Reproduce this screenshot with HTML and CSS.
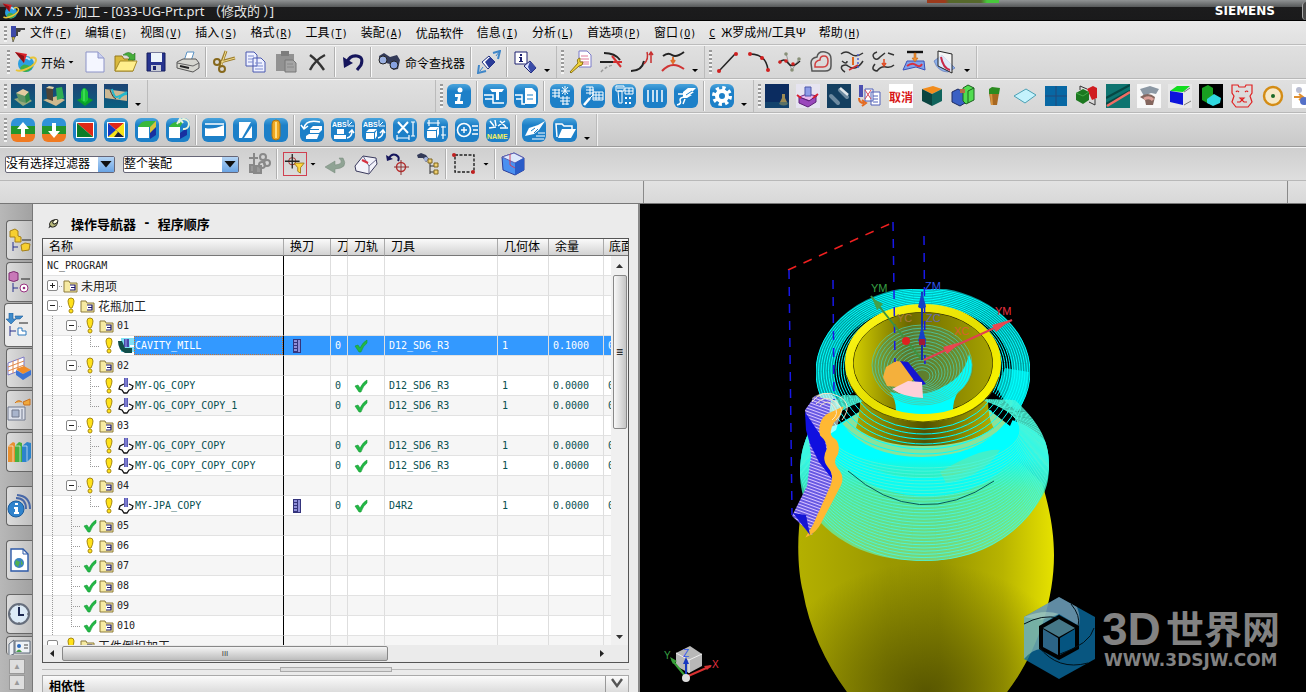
FILE: index.html
```html
<!DOCTYPE html>
<html lang="zh-CN">
<head>
    <meta charset="UTF-8">
    <meta name="viewport" content="width=device-width, initial-scale=1.0">
    <title>NX 7.5 - 加工</title>
    <link rel="stylesheet" href="styles.css">
</head>
<body>
    <!-- Shared icons -->
    <svg class="defs" width="0" height="0" aria-hidden="true">
        <symbol id="nx" viewBox="0 0 24 24">
            <circle cx="12" cy="14" r="8" fill="#2b9fe0"/><path d="M6 18q3-5 7-3t6-2q0 8-7 9-4 0-6-4z" fill="#3fae49"/>
            <path d="M9 8q5-1 7 2" stroke="#bfe8ff" stroke-width="2" fill="none"/>
            <path d="M2 20c5 3 20-4 20-10 0-3-4-3-6-2" fill="none" stroke="#e8c53a" stroke-width="2"/>
            <path d="M1 2l12 2-3 9z" fill="#d8222a"/><path d="M1 2l9 11 0-7z" fill="#8d1016"/>
        </symbol>
        <symbol id="warn" viewBox="0 0 18 18"><path d="M6 4q0-3 3-3t3 3q0 3-2 7H8Q6 7 6 4z" fill="#ffe21a" stroke="#a88a10"/><circle cx="9" cy="14" r="2" fill="#ffe21a" stroke="#a88a10"/></symbol>
        <symbol id="ok" viewBox="0 0 18 18"><path d="M3 9l3-1 2 3q3-6 7-8l0 3q-4 3-6 9H7z" fill="#22b845" stroke="#159a34" stroke-width=".6"/></symbol>
        <symbol id="folder" viewBox="0 0 16 16"><path d="M1 3h5l1 2h7v9H1z" fill="#f6eaa2" stroke="#8c7a3c"/><path d="M7 7h5v5H7M8 9.500h4" stroke="#1c1670" stroke-width="1.2" fill="#fff"/></symbol>
        <symbol id="mill" viewBox="0 0 16 16"><path d="M6 6L2 8l-1 3 3 1 2 3h3l2-3 3-1 1-3-4-2" fill="#fff" stroke="#111" stroke-width="1.3"/><path d="M6 0h4v9H6z" fill="#5a5ab4"/><path d="M8 0v9" stroke="#a0a0e8"/></symbol>
        <symbol id="cavity" viewBox="0 0 16 16"><rect x="3" width="13" height="14" fill="#7fe0f4"/><path d="M0 3h4l3 7h7v5H7Q0 12 0 3z" fill="#124f4a"/><path d="M6 1h5v8H6z" fill="#4848a8"/><path d="M8 1v8" stroke="#a0a0f0"/><path d="M12 7h4v2h-4z" fill="#fff"/></symbol>
        <symbol id="tool" viewBox="0 0 10 14"><path d="M1 0h8v14H1z" fill="#34347c"/><path d="M2 2h3M2 5h3M2 8h3M2 11h3M7 1v12" stroke="#8f8fd8" stroke-width="2"/></symbol>
    </svg>

    <header class="titlebar">
        <svg class="app-logo"><use href="#nx"/></svg>
        <h1>NX 7.5 - 加工 - [033-UG-Prt.prt （修改的 ）]</h1>
        <span class="top-mark"></span>
        <span class="brand">SIEMENS</span>
        <button class="win-btn" aria-label="最小化"></button>
    </header>

    <nav class="menubar">
        <span class="grip"></span>
        <svg class="menu-icon" viewBox="0 0 18 18"><path d="M2 1h5v11H2z" fill="#3d49a8"/><path d="M3 12l1 5 2-5z" fill="#d8c23c" stroke="#333" stroke-width=".6"/><path d="M7 3h9v2h-4l-1 2H9v4H7z" fill="#444"/></svg>
        <a href="#">文件<span>(<u>F</u>)</span></a>
        <a href="#">编辑<span>(<u>E</u>)</span></a>
        <a href="#">视图<span>(<u>V</u>)</span></a>
        <a href="#">插入<span>(<u>S</u>)</span></a>
        <a href="#">格式<span>(<u>R</u>)</span></a>
        <a href="#">工具<span>(<u>T</u>)</span></a>
        <a href="#">装配<span>(<u>A</u>)</span></a>
        <a href="#">优品软件</a>
        <a href="#">信息<span>(<u>I</u>)</span></a>
        <a href="#">分析<span>(<u>L</u>)</span></a>
        <a href="#">首选项<span>(<u>P</u>)</span></a>
        <a href="#">窗口<span>(<u>O</u>)</span></a>
        <a href="#"><span><u>C</u> </span>Ж罗成州/工具Ψ</a>
        <a href="#">帮助<span>(<u>H</u>)</span></a>
    </nav>

    <!-- Standard / curve toolbar -->
    <div class="toolbar">
        <div class="group first">
            <span class="grip"></span>
            <button class="wide start"><svg><use href="#nx"/></svg>开始<i class="caret"></i></button>
            <button aria-label="新建"><svg viewBox="0 0 24 24"><path d="M3 2h12l6 6v14H3z" fill="#f4f6ff" stroke="#8c93c8"/><path d="M15 2v6h6" fill="#c9d0f0" stroke="#8c93c8"/></svg></button>
            <button aria-label="打开"><svg viewBox="0 0 24 24"><path d="M1 6h7l2 3h9v12H1z" fill="#d9b93c" stroke="#94791c"/><path d="M1 21L6 11h17l-4 10z" fill="#ffee8c" stroke="#a58a28"/><path d="M9 5q6-5 10 0l2-2v7h-7l2-2q-3-4-7-3z" fill="#45ad3a" stroke="#22701c" stroke-width=".6"/></svg></button>
            <button aria-label="保存"><svg viewBox="0 0 24 24"><path d="M2 3h18v18H2z" fill="#27348f" stroke="#141c5c"/><path d="M6 3h11v9H6z" fill="#eef5fb"/><path d="M6 15h10v6H6z" fill="#c9ccd6"/><path d="M8 16h3v4H8z" fill="#1a2470"/></svg></button>
            <button aria-label="打印"><svg viewBox="0 0 24 24"><path d="M8 11l3-9h7l-3 9z" fill="#fff" stroke="#5a92c4"/><path d="M1 12l6-3h13l3 4v5l-6 4L1 18z" fill="#d6d6d0" stroke="#555"/><path d="M1 13l16 3 6-3" fill="none" stroke="#666"/><path d="M4 16l9 2" stroke="#222" stroke-width="2"/></svg></button>
            <span class="sep"></span>
            <button aria-label="剪切"><svg viewBox="0 0 24 24"><path d="M14 1L8 17M23 8L8 12" stroke="#9c7c2c" stroke-width="3"/><path d="M14 1L9 16M23 8L9 12" stroke="#f0dc8c" stroke-width="1"/><g fill="none" stroke="#86681c" stroke-width="2"><circle cx="5" cy="12" r="3"/><circle cx="10" cy="19" r="3"/></g></svg></button>
            <button aria-label="复制"><svg viewBox="0 0 24 24"><path d="M3 2h8l3 3v11H3zM10 8h8l4 4v10H10z" fill="#eef1ff" stroke="#4a58b0"/><path d="M5 6h6M5 9h5M5 12h5M12 13h7M12 16h8M12 19h8" stroke="#7f8cd0"/></svg></button>
            <button aria-label="粘贴"><svg viewBox="0 0 24 24"><path d="M2 4h18v17H2z" fill="#929292"/><path d="M7 1h8v5H7z" fill="#7d7d7d"/><path d="M11 10h8l3 3v9H11z" fill="#a5a5a5" stroke="#777"/><path d="M13 14h6M13 17h7" stroke="#888"/></svg></button>
            <button aria-label="删除"><svg viewBox="0 0 24 24"><path d="M5 5q8 6 14 15M20 5Q10 10 5 20" stroke="#333" stroke-width="2.4" fill="none"/></svg></button>
            <span class="sep"></span>
            <button aria-label="撤消"><svg viewBox="0 0 24 24"><path d="M6 12Q9 5 16 6t4 9l-4 5" fill="none" stroke="#16165c" stroke-width="3"/><path d="M2 7l1 11 9-5z" fill="#16165c"/></svg></button>
            <span class="sep"></span>
            <button class="wide finder"><svg viewBox="0 0 24 24"><path d="M2 6l5-3 6 4 7-2 3 5-2 9-5 1-3-6-4-1-2 1-4-2z" fill="#333a58"/><circle cx="6" cy="10" r="4" fill="#9ab0e0" stroke="#222"/><circle cx="17" cy="15" r="4" fill="#87a2e0" stroke="#222"/></svg>命令查找器</button>
            <span class="sep"></span>
            <button aria-label="旋转"><svg viewBox="0 0 24 24"><path d="M5 12l7-6 6 6-7 7z" fill="#fff" stroke="#223080"/><path d="M8 12l5-5 5 5-6 6z" fill="#2a3c98"/><path d="M16 3l7-2-2 8M2 15l-1 8 8-2" fill="none" stroke="#3f86c8" stroke-width="2"/><path d="M19 6l3-4M3 21l3-4" stroke="#3f86c8"/></svg></button>
            <span class="sep"></span>
            <button aria-label="对象信息"><svg viewBox="0 0 24 24"><path d="M2 2h12v12H2z" fill="#fff" stroke="#1c2070"/><path d="M7 4h2v2H7zM6 7h3v4h1v1H6v-1h1V8H6z" fill="#1c2070"/><path d="M11 16l6-5 6 7-5 5z" fill="#d8e0ff" stroke="#1c2070"/><path d="M17 11l6 7-5 5-3-6z" fill="#3a4ca8"/></svg></button>
            <i class="caret low"></i>
        </div>
        <div class="group">
            <span class="grip"></span>
            <button aria-label="编辑曲线"><svg viewBox="0 0 24 24"><path d="M11 1h8l4 4v12H11z" fill="#fff" stroke="#7a7ac8"/><path d="M13 6h7M13 9h8M13 12h8M13 14h8" stroke="#e07a98"/><path d="M2 22l8-9q-2-4 2-5l0 4 3 0q0 4-4 4l-8 7z" fill="#f2d43c" stroke="#8a7418"/></svg></button>
            <button aria-label="修剪曲线"><svg viewBox="0 0 24 24" fill="none" stroke-width="1.5"><path d="M5 3q11 0 16 7M1 12h13" stroke="#222" stroke-width="2"/><path d="M14 12h9M13 6l9 11" stroke="#d43030" stroke-width="2"/><path d="M2 22q5-6 13-7" stroke="#999" stroke-dasharray="3 2"/></svg></button>
            <button aria-label="曲线长度"><svg viewBox="0 0 24 24" fill="none" stroke-width="1.5"><path d="M1 21q11 0 13-10" stroke="#222" stroke-width="2"/><path d="M14 14q5-5 3-12M21 3v10M19 5l2-3 2 3" stroke="#c83030"/></svg></button>
            <button aria-label="光顺曲线"><svg viewBox="0 0 24 24" fill="none" stroke-width="2"><path d="M2 6q5-4 9-1t12-3" stroke="#222"/><path d="M12 7v5M10 10l2 3 2-3" stroke="#e0702c"/><path d="M1 21q10-11 22-2" stroke="#d03434"/></svg></button>
            <i class="caret low"></i>
        </div>
        <div class="group">
            <span class="grip"></span>
            <button aria-label="直线"><svg viewBox="0 0 24 24"><path d="M3 21L19 4" stroke="#222" stroke-width="1.5"/><circle cx="3" cy="21" r="2" fill="#d02020"/><circle cx="20" cy="4" r="2" fill="#d02020"/></svg></button>
            <button aria-label="圆弧"><svg viewBox="0 0 24 24"><path d="M3 4q16 0 18 16" stroke="#222" stroke-width="1.5" fill="none"/><g fill="#d02020"><circle cx="3" cy="4" r="2"/><circle cx="15" cy="8" r="2"/><circle cx="21" cy="20" r="2"/></g></svg></button>
            <button aria-label="样条"><svg viewBox="0 0 24 24"><path d="M8 3l2 8 4 9 7-11" stroke="#999" fill="none"/><path d="M1 13q5-6 9 0t12-2" stroke="#222" stroke-width="1.5" fill="none"/><g fill="#d02020"><circle cx="2" cy="12" r="1.8"/><circle cx="8" cy="11" r="1.8"/><circle cx="15" cy="14" r="1.8"/></g><g fill="#889078"><circle cx="8" cy="4" r="1.8"/><circle cx="14" cy="20" r="1.8"/><circle cx="21" cy="9" r="1.8"/></g></svg></button>
            <button aria-label="偏置曲线"><svg viewBox="0 0 24 24" fill="none"><path d="M2 13q0-5 6-6 1-6 8-5 6 1 6 7v7q0 5-6 5H3z" stroke="#555" stroke-width="1.5"/><path d="M6 15q0-4 5-5 0-4 4-4 4 0 4 5 0 6-5 6H6z" stroke="#d04040" stroke-width="1.5"/></svg></button>
            <button aria-label="桥接曲线"><svg viewBox="0 0 24 24" fill="none" stroke="#333" stroke-width="1.5"><path d="M1 4q5-4 10 0t12-1M2 11q5 4 5 0M5 22q-5-3-3-6 4-2 6 0 8 6 15-5"/><path d="M9 20l9-5" stroke="#d03030"/><path d="M13 7v8" stroke="#e06820" stroke-width="2"/><path d="M18 4v14" stroke="#5060d0" stroke-dasharray="2"/></svg></button>
            <button aria-label="投影曲线"><svg viewBox="0 0 24 24" fill="none" stroke="#333" stroke-width="1.5"><path d="M6 2Q0 4 3 8q3 3 6-1l5-4M17 3l6 2"/><path d="M4 14q-5 6 2 7 4-5 9-4t8-2"/><path d="M13 9v5M11 13l2 3 2-3" stroke="#e04820"/></svg></button>
            <button aria-label="组合投影"><svg viewBox="0 0 24 24"><path d="M5 2h16" stroke="#111" stroke-width="2.4"/><path d="M1 20l4-9h17l1 9-9-3z" fill="#7fa2ec" stroke="#3a50b8"/><path d="M5 16q5-4 9-1t6-1" stroke="#d83040" stroke-width="2" fill="none"/><path d="M12 3h2v5h2l-3 4-3-4h2z" fill="#f09030" stroke="#b05a10" stroke-width=".5"/></svg></button>
            <button aria-label="相交曲线"><svg viewBox="0 0 24 24"><path d="M1 11l8-6 13 13-7 4q-10 0-14-11z" fill="#8cb2ee" stroke="#5068b0" stroke-width=".6"/><path d="M5 1l14 3v19L5 16z" fill="#fff" fill-opacity=".7" stroke="#222"/><path d="M8 7q2 11 9 13" fill="none" stroke="#c82848" stroke-width="2"/></svg></button>
            <i class="caret low"></i>
        </div>
        <div class="group rest"></div>
    </div>

    <!-- Machining toolbar -->
    <div class="toolbar">
        <div class="group">
            <span class="grip"></span>
            <button class="navy" aria-label="型腔铣"><svg viewBox="0 0 24 24"><path d="M3 15l12-3 6 5-9 5z" fill="#94a87c"/><path d="M5 9l3 8 7 2V10z" fill="#5f9466"/><path d="M5 9l7-4 6 3-4 4z" fill="#e4cca0"/><path d="M14 12l4-4 1 8-4 3z" fill="#2a8844"/></svg></button>
            <button class="navy" aria-label="等高铣"><svg viewBox="0 0 24 24"><path d="M1 16l14-4 8 4-9 6z" fill="#cdb98f"/><path d="M4 4h7v13l-6-2z" fill="#4d4438"/><path d="M4 4l3-2 5 1-1 2z" fill="#dfcfa8"/><path d="M14 4l6-1 2 11-7 2z" fill="#2fae54"/></svg></button>
            <button class="navy" aria-label="曲面铣"><svg viewBox="0 0 24 24"><path d="M4 16l8-4 8 4-8 6z" fill="#08a028"/><path d="M8 16V8q3-8 7 0v8l-3 3z" fill="#19c536"/><path d="M11 5v12" stroke="#5ff070"/></svg></button>
            <button class="navy" aria-label="清根铣"><svg viewBox="0 0 24 24"><path d="M1 5l22 3v9l-22-3z" fill="#cbb893"/><path d="M8 5q2 9 5 8t10-5M15 15q3-5 8-5" stroke="#24b8cc" stroke-width="2" fill="none"/><path d="M6 6q3 8 6 9" stroke="#333" fill="none"/></svg></button>
            <i class="caret low"></i>
        </div>
        <div class="group gap"></div>
        <div class="group">
            <span class="grip"></span>
            <button class="blue" aria-label="信息"><svg viewBox="0 0 24 24"><circle cx="13" cy="6" r="2.5" fill="#fff"/><path d="M8 10h6l-1 7h3v3H8v-3h2l1-4H8z" fill="#fff"/></svg></button>
            <span class="sep"></span>
            <button class="blue" aria-label="刀具"><svg viewBox="0 0 24 24" class="w"><path d="M7 5h14l-2 3h-3v8h-3V8H9z" fill="#fff" stroke="none"/><path d="M1 11h9v4H2M10 15v4h11" stroke-width="1.5"/></svg></button>
            <button class="blue" aria-label="刀具表"><svg viewBox="0 0 24 24" class="w"><path d="M11 4h7l4 4v12H11z" fill="#fff" stroke="none"/><path d="M1 11h7v4H2M8 15v5h3" stroke-width="1.5"/><path d="M13 11h6M13 15h6" stroke="#1d80c8" stroke-width="1"/></svg></button>
            <span class="sep"></span>
            <button class="blue" aria-label="生成"><svg viewBox="0 0 24 24" class="w thin"><path d="M2 6h8M2 9h8M2 12h8M5 5v9M9 5v9M15 2v9M11 7h9M12 3l6 7M18 3l-6 7M10 14h10M10 17h10M12 20h7M13 12v9M17 12v9"/></svg></button>
            <button class="blue" aria-label="模拟"><svg viewBox="0 0 24 24" class="w thin"><path d="M5 3h7v8l-4 4-4 5M5 6h8M5 9h7M9 3v8M12 8h10v8H12zM12 11h10M12 14h10M15 8v8M18 8v8"/><path d="M3 21l6-7" stroke-width="2.6"/></svg></button>
            <button class="blue" aria-label="后处理"><svg viewBox="0 0 24 24" class="w thin"><path d="M4 2h8v5H4zM5 4h6M6 7h4v12H7zM13 4h8v6h-8zM13 7h8M17 4v6"/><path d="M13 14h8M13 19h8" stroke-width="2" stroke-dasharray="2"/></svg></button>
            <button class="blue" aria-label="车间文档"><svg viewBox="0 0 24 24" class="w"><path d="M5 6v12M10 6v12M14 6v12M19 6v12" stroke-width="1.5"/></svg></button>
            <button class="blue" aria-label="刀路"><svg viewBox="0 0 24 24" class="w"><path d="M9 8l5-4h8l-4 4h2l-4 3h2l-5 3H9z" fill="#fff" stroke="none"/><path d="M4 10h6M3 21q5-1 3-5 0-3 6-3M9 20l2-5" stroke-width="1.5"/><path d="M12 11l6-4" stroke="#1d80c8" stroke-width="1"/></svg></button>
            <span class="sep"></span>
            <button class="blue" aria-label="设置"><svg viewBox="0 0 24 24" class="w"><circle cx="12" cy="12" r="8" stroke-width="4" stroke-dasharray="3.2 3.08"/><circle cx="12" cy="12" r="5" stroke-width="4"/></svg></button>
            <i class="caret low"></i>
        </div>
        <div class="group last">
            <span class="grip"></span>
            <button aria-label="刀柄"><svg viewBox="0 0 24 24"><path d="M0 0h24v24H0z" fill="#0b2c60"/><path d="M14 20l3-6 0-4h3v4l3 6q-4 3-9 0z" fill="#9c8a54"/><path d="M0 18h24v6H0z" fill="#1a5878" opacity=".5"/></svg></button>
            <button aria-label="工件"><svg viewBox="0 0 24 24"><path d="M0 0h24v24H0z" fill="#e6e4f0"/><path d="M3 13l8-3 10 2-7 5z" fill="#e8b8ee" stroke="#6c2888"/><path d="M3 13v6l9 4 8-5v-6l-7 5z" fill="#9a48bc" stroke="#5c2078"/><path d="M9 3h6v9H9z" fill="#8d9ce8" stroke="#4c56a8"/><path d="M1 11l4 3M22 10l-5 4" stroke="#d82030" stroke-width="2"/></svg></button>
            <button aria-label="圆柱"><svg viewBox="0 0 24 24"><path d="M0 0h24v24H0z" fill="#143f60"/><path d="M4 12l7 7M13 6l7 7" stroke="#6d8aa0" stroke-width="4" stroke-linecap="round"/><path d="M13 4l8 7" stroke="#e0e6ea" stroke-width="2.5"/></svg></button>
            <button aria-label="列表"><svg viewBox="0 0 24 24"><path d="M1 1h4v12H1z" fill="#4c50b0"/><path d="M1 14q0 5 5 5M4 16l4 3-4 3" stroke="#e46a20" stroke-width="2" fill="none"/><path d="M7 5h8v12H7zM13 8h9v13h-9z" fill="#fff" stroke="#5060b8"/><path d="M7 6l6 9M13 6l-6 9" stroke="#d84858"/><path d="M15 12h5M15 15h5M15 18h5" stroke="#5060b8"/></svg></button>
            <button class="cancel">取消</button>
            <button aria-label="毛坯"><svg viewBox="0 0 24 24"><path d="M2 5l11-3 9 3-10 5z" fill="#f28c1c"/><path d="M2 5l10 5v12L2 17z" fill="#0a4440"/><path d="M12 10l10-5v12l-10 5z" fill="#10645c"/></svg></button>
            <button aria-label="装配块"><svg viewBox="0 0 24 24"><path d="M1 8l6-3 7 4v10l-5 3-8-4z" fill="#3a60c4" stroke="#1c2a60"/><path d="M12 4l5-3 6 3v12l-8 4-3-3z" fill="#52dc50" stroke="#1c6020"/><path d="M17 7v12M17 7l6-3" stroke="#1c6020"/><path d="M9 5h5v4H9z" fill="#b86848"/></svg></button>
            <button aria-label="夹具"><svg viewBox="0 0 24 24"><path d="M7 9h10l-2 12H9z" fill="#a86820"/><path d="M9 9l1 12" stroke="#d89440" stroke-width="2"/><path d="M7 5l3-2 8 1-1 6H7z" fill="#2c8c20"/></svg></button>
            <button aria-label="平面"><svg viewBox="0 0 24 24"><path d="M1 12l12-7 10 6-11 8z" fill="#c4f2fc" stroke="#4ca0b4"/></svg></button>
            <button aria-label="网格"><svg viewBox="0 0 24 24"><path d="M1 2h22v20H1z" fill="#0868a4"/><path d="M1 12h22M12 2v20" stroke="#224878"/></svg></button>
            <button aria-label="布尔"><svg viewBox="0 0 24 24"><path d="M12 5l6-3 4 2v10l-5 2z" fill="#d01c20"/><path d="M1 9l7-4 6 3v8l-6 4-7-4z" fill="#1c7820"/><path d="M1 9l7 3 6-4" stroke="#46a848" fill="none"/><path d="M5 6V2l7 3M20 15v6l-6-3" stroke="#333" fill="none"/></svg></button>
            <button aria-label="曲面"><svg viewBox="0 0 24 24"><path d="M0 0h24v24H0z" fill="#0e7470"/><path d="M0 14L24 1M0 20L24 7" stroke="#064844" stroke-width="2"/><path d="M1 22L24 8" stroke="#f06c64" stroke-width="2.5"/></svg></button>
            <button aria-label="模具"><svg viewBox="0 0 24 24"><path d="M0 0h24v24H0z" fill="#f8f8f8"/><path d="M3 5l10-3 9 3-3 5-5-1-7 3z" fill="#8c98a4"/><path d="M3 13q8-6 15 0l-2 8H9l-1-5z" fill="#84665e"/><path d="M7 15q6-3 9 1" stroke="#dca098" stroke-width="3" fill="none"/></svg></button>
            <button aria-label="分型面"><svg viewBox="0 0 24 24"><path d="M0 0h24v24H0z" fill="#e8e8e8"/><path d="M2 7l7-5h13l-7 6z" fill="#12dd20"/><path d="M2 7l13 2v12L2 18z" fill="#0c14dc"/><path d="M16 8l6-4M16 21l7-4" stroke="#777"/></svg></button>
            <button aria-label="台阶"><svg viewBox="0 0 24 24"><path d="M0 0h24v24H0z" fill="#000"/><path d="M3 4l6-3 5 3v8l-4 8-7-4z" fill="#18a020"/><path d="M8 15l7-5 7 4-1 5-7 3-6-3z" fill="#30d8e0"/></svg></button>
            <button aria-label="小熊"><svg viewBox="0 0 24 24" fill="none" stroke="#e02020" stroke-width="1.2"><path d="M2 9V1h6l1 2h6l1-2h6v8l-2 3 2 6-4 5H6l-4-5 2-6z"/><path d="M6 8q1-2 3 0M15 8q2-2 3 0M10 14l2 2 2-2zM7 18h3l2-2 2 2h3"/></svg></button>
            <button aria-label="圆心"><svg viewBox="0 0 24 24"><circle cx="12" cy="12" r="9" fill="#f6e8c8" stroke="#d48c14" stroke-width="2.4"/><circle cx="12" cy="12" r="2" fill="#186828"/></svg></button>
            <button aria-label="更多"><svg viewBox="0 0 24 24"><path d="M0 0h24v24H0z" fill="#fff"/><circle cx="7" cy="6" r="3" fill="#b8bcd0"/><path d="M2 13h8M7 10l4 3-4 3" stroke="#e09030" stroke-width="2" fill="none"/><circle cx="12" cy="17" r="4" fill="#5470c8"/></svg></button>
        </div>
    </div>

    <!-- Layer and annotation toolbar -->
    <div class="toolbar dark">
        <div class="group">
            <span class="grip"></span>
            <button class="tri" aria-label="上移"><svg viewBox="0 0 24 24"><path d="M12 4l6 7h-4v8h-4v-8H6z" fill="#fff"/></svg></button>
            <button class="tri" aria-label="下移"><svg viewBox="0 0 24 24"><path d="M12 20l6-7h-4V5h-4v8H6z" fill="#fff"/></svg></button>
            <button class="blue" aria-label="双色"><svg viewBox="0 0 24 24"><path d="M3 4h18v16H3z" fill="#fff"/><path d="M4 5h16v14z" fill="#e02818"/><path d="M4 5l16 14H4z" fill="#0c7c28"/></svg></button>
            <button class="blue" aria-label="四色"><svg viewBox="0 0 24 24"><path d="M3 4h18v16H3z" fill="#fff"/><path d="M4 5h16l-8 7z" fill="#e02818"/><path d="M20 5v14l-8-7z" fill="#f8e418"/><path d="M4 19h16l-8-7z" fill="#202038"/><path d="M4 5v14l8-7z" fill="#1838c0"/><path d="M4 19l8-7 2 2-4 5z" fill="#f8e418"/></svg></button>
            <button class="blue" aria-label="颜色"><svg viewBox="0 0 24 24"><path d="M3 9h11v11H3z" fill="#fff"/><path d="M3 9q3-6 8-6h10l-6 6z" fill="#38b83c"/><path d="M15 9l6-6v8l-6 8z" fill="#d8c438"/><path d="M15 15l6-6v8l-6 4z" fill="#1830a0"/></svg></button>
            <button class="blue" aria-label="颜色还原"><svg viewBox="0 0 24 24"><path d="M3 9h11v11H3z" fill="#fff"/><path d="M3 9q3-5 8-5h6l-3 5z" fill="#38b83c"/><path d="M14 15l7-5v7l-7 4z" fill="#1830a0"/><path d="M13 5a5 5 0 1 1 4 6M11 6l3-5 3 4" fill="none" stroke="#e8f4dc" stroke-width="2"/></svg></button>
            <span class="sep"></span>
            <button class="blue" aria-label="上曲面"><svg viewBox="0 0 24 24"><path d="M3 10q8 2 19-3v11H3z" fill="#fff"/><path d="M3 6h19" stroke="#fff" stroke-width="1.5"/></svg></button>
            <button class="blue" aria-label="斜切"><svg viewBox="0 0 24 24"><path d="M6 4h12L9 20H6z" fill="#fff"/><path d="M19 8v12h-8z" fill="#fff"/></svg></button>
            <button class="blue" aria-label="圆柱体"><svg viewBox="0 0 24 24"><rect x="8" y="2" width="8" height="20" rx="4" fill="#f0a820" stroke="#a8741c"/><path d="M12 4v16" stroke="#ffdc80" stroke-width="2"/></svg></button>
            <span class="sep"></span>
            <button class="blue" aria-label="翻转"><svg viewBox="0 0 24 24" class="w"><path d="M10 11l3-3h9l-3 3zM10 12h9v3h-9zM19 11l3-3v4l-3 3zM6 18l3-2h10l-2 5H6z" fill="#fff" stroke="none"/><path d="M20 4Q6 1 4 10M1 7l3 4 4-3" stroke-width="1.5"/></svg></button>
            <button class="blue" aria-label="绝对坐标"><svg viewBox="0 0 24 24" class="w"><text x="1" y="9" class="tiny">ABS</text><path d="M17 2v6h6M18 7l3-3" stroke-width="1"/><path d="M6 11h7v5H6zM3 17h12v4H3z" fill="#fff" stroke="none"/><path d="M16 20q5-1 5-7M18 15l3-3 2 3" stroke-width="1.5"/></svg></button>
            <button class="blue" aria-label="绝对移动"><svg viewBox="0 0 24 24" class="w"><text x="1" y="9" class="tiny">ABS</text><path d="M17 2v6h6M18 7l3-3" stroke-width="1"/><path d="M4 14l3-3h8l-3 3zM4 15h8v6H4zM13 15l2-3v6l-2 3z" fill="#fff" stroke="none"/><path d="M16 20q5-1 5-7M18 15l3-3 2 3" stroke-width="1.5"/></svg></button>
            <button class="blue" aria-label="删除尺寸"><svg viewBox="0 0 24 24" class="w"><path d="M5 4l10 11M15 4L5 15"/><path d="M20 4v14M18 4h4M18 18h4M4 20h12M4 17v5M16 17v5" stroke-width="1.2"/></svg></button>
            <button class="blue" aria-label="尺寸"><svg viewBox="0 0 24 24" class="w"><path d="M3 12l3-3h9l-3 3zM3 13h9v7H3zM13 12l2-3v7l-2 4z" fill="#fff" stroke="none"/><path d="M3 5h13M5 2v6M14 2v6M19 8v13M17 9h5M17 17h5" stroke-width="1.2"/></svg></button>
            <button class="blue" aria-label="孔表"><svg viewBox="0 0 24 24" class="w"><circle cx="9" cy="12" r="6.5" stroke-width="1.6"/><path d="M6 12h6M9 9v6M17 8h6M18 12h5M17 16h6" stroke-width="1.4"/></svg></button>
            <button class="blue" aria-label="命名"><svg viewBox="0 0 24 24" class="w"><path d="M4 3l4 5M9 2l1 6M12 8l7-5M14 3l6 6M3 10l7-1M14 10h8" stroke-width="1.5"/><text x="1" y="21" class="name">NAME</text></svg></button>
            <span class="sep"></span>
            <button class="blue" aria-label="清理"><svg viewBox="0 0 24 24" class="w"><path d="M23 3l-7 4-9 3-4 8 9-2 5-4z" fill="#fff" stroke="none"/><path d="M9 13l4-3M12 15l4-4" stroke="#1d80c8" stroke-width="1"/><path d="M16 15h7M14 18h9M10 21h12" stroke-width="1"/></svg></button>
            <button class="blue" aria-label="文件夹"><svg viewBox="0 0 24 24" class="w"><path d="M4 19L3 6h6l2 2h8v3" stroke-width="1.5"/><path d="M5 20l4-9h14l-5 9z" fill="#fff" stroke="none"/></svg></button>
            <i class="caret low"></i>
        </div>
        <div class="group rest"></div>
    </div>

    <!-- Selection bar -->
    <div class="toolbar select-bar">
        <div class="combo filter"><select aria-label="选择过滤器"><option>没有选择过滤器</option></select><span></span></div>
        <div class="combo scope"><select aria-label="选择范围"><option>整个装配</option></select><span></span></div>
        <button aria-label="关联"><svg viewBox="0 0 24 24" fill="none" stroke="#888" stroke-width="2"><path d="M2 6h9M7 1v21M3 13h4v7H3zM9 14h5v7H9z" fill="#999"/><circle cx="16" cy="5" r="3"/><circle cx="20" cy="11" r="3"/><circle cx="15" cy="13" r="3"/></svg></button>
        <span class="sep"></span>
        <button class="boxed" aria-label="捕捉过滤"><svg viewBox="0 0 24 24"><circle cx="9" cy="9" r="4" fill="none" stroke="#a02828"/><path d="M9 1v16M1 9h16" stroke="#222" stroke-width="1.4"/><path d="M11 11h11l-4 5v6l-3-2v-4z" fill="#ffd83c" stroke="#a07818"/></svg></button>
        <i class="caret"></i>
        <button aria-label="返回"><svg viewBox="0 0 24 24"><path d="M16 6q6 6-4 7V9l-10 6 10 6v-4q14-1 8-11z" fill="#8fa394" stroke="#76897a" stroke-width=".5"/></svg></button>
        <button aria-label="查看"><svg viewBox="0 0 24 24"><path d="M1 14L9 4l13 2 1 6-8 10-13-3z" fill="#f2f2fa" stroke="#39395c"/><path d="M9 4l6 10v8M15 14l8-7" fill="none" stroke="#6a6a8c"/><path d="M8 8l6 3" stroke="#d83040" stroke-width="2"/></svg></button>
        <button aria-label="重定位"><svg viewBox="0 0 24 24" fill="none"><path d="M4 6q3-5 7-3t2 6" stroke="#16165c" stroke-width="2"/><path d="M1 3l1 6 6-2z" fill="#16165c"/><circle cx="16" cy="15" r="4.5" stroke="#b83030" stroke-width="1.5"/><path d="M16 8v15M9 15h15" stroke="#8c3030"/></svg></button>
        <button aria-label="查找组件"><svg viewBox="0 0 24 24"><path d="M1 3l4-2 5 2 3 4-3 3-3-4-5 0z" fill="#333a58"/><circle cx="10" cy="7" r="2" fill="#a8b8e0"/><path d="M14 9v13M14 14h4M14 20h4" stroke="#333" fill="none"/><path d="M12 7h4v4h-4zM18 11h4v4h-4zM18 18h4v4h-4z" fill="#f0d070" stroke="#7c6420"/></svg></button>
        <span class="sep"></span>
        <button aria-label="矩形选择"><svg viewBox="0 0 24 24"><path d="M3 3h19v17H3z" fill="none" stroke="#222" stroke-width="1.4" stroke-dasharray="3 1.5"/><circle cx="2" cy="3" r="2" fill="#c02020"/><circle cx="21" cy="20" r="2" fill="#c02020"/></svg></button>
        <i class="caret"></i>
        <span class="sep"></span>
        <button aria-label="着色"><svg viewBox="0 0 24 24"><path d="M1 5l12-4 10 5v12l-9 5L2 18z" fill="#4a90f0" stroke="#2c3c98"/><path d="M1 5l12-4 10 5-9 5z" fill="#dce8fc" stroke="#6060b0"/><path d="M14 11v12l9-5V6z" fill="#2a5cc8"/><path d="M9 2v11l5 3" stroke="#d04060" fill="none"/></svg></button>
    </div>

    <div class="cue-line"><span></span><span></span><span></span></div>

    <main>
        <aside class="resource-bar">
            <button aria-label="装配导航器"><svg viewBox="0 0 24 24"><path d="M3 3l5-2 3 2v5l3 1v5H8V9H3z" fill="#f6cf30" stroke="#a5801a"/><path d="M6 14v9M6 19h5" stroke="#27308c"/><path d="M15 12h9" stroke="#222"/><path d="M14 17l4-2 5 1-1 6-7 1z" fill="#f6cf30" stroke="#a5801a"/></svg></button>
            <button aria-label="部件导航器"><svg viewBox="0 0 24 24"><path d="M2 3q5-3 9 0v7q-4 3-9 0z" fill="#c878b8" stroke="#7c2c70"/><path d="M6 13v9M6 18h5" stroke="#27308c"/><path d="M14 9h9" stroke="#222"/><circle cx="17" cy="18" r="4" fill="#fff" stroke="#983080"/><circle cx="17" cy="18" r="1.3" fill="#983080"/></svg></button>
            <button class="active" aria-label="操作导航器"><svg viewBox="0 0 24 24"><path d="M4 0h4v6h3l-5 5-5-5h3zM10 3h8l-3 3h-4z" fill="#3f8ccc" stroke="#205c98" stroke-width=".6"/><path d="M5 13v10M5 18h6" stroke="#27308c"/><path d="M14 10h9" stroke="#222"/><path d="M13 15h4v3h4v4h-8z" fill="#fff" stroke="#2c78bc"/></svg></button>
            <button aria-label="加工特征"><svg viewBox="0 0 24 24"><path d="M1 7l16-6v12L1 19z" fill="#fff" stroke="#7c78c4"/><path d="M1 11l16-6M1 15l16-6M6 5v12M11 3v12" stroke="#e0884c"/><path d="M9 13l8-3 7 4-8 4z" fill="#f08c28"/><path d="M9 14l7 4v6l-7-5zM16 18l8-4v5l-8 5z" fill="#3c74d4"/></svg></button>
            <button aria-label="机床"><svg viewBox="0 0 24 24"><path d="M1 9h17v13H1z" fill="#dce0ea" stroke="#70788c"/><path d="M5 12h7v7H5zM15 11v10" fill="#a8b4cc" stroke="#70788c"/><path d="M8 5q3-4 7-1M16 4l7-3v6l-6 0z" fill="#f0a83c" stroke="#c87020"/></svg></button>
            <button aria-label="重用库"><svg viewBox="0 0 24 24"><path d="M1 6l5-4 2 1v19H1z" fill="#e89030"/><path d="M8 6l4-4 3 1v19H8z" fill="#48b040"/><path d="M15 6l5-4 4 1v15l-4 4h-5z" fill="#2c84cc"/><path d="M1 6h5v16M8 6h5v16M15 6h5v16" stroke="#fff" stroke-opacity=".6" fill="none"/></svg></button>
            <button class="spaced" aria-label="HD3D"><svg viewBox="0 0 24 24"><circle cx="9" cy="15" r="8" fill="#3083cc" stroke="#1c5c9c"/><path d="M8 9h3v2H8zM7 13h4v5h1v2H7v-2h1v-3H7z" fill="#fff"/><path d="M9 4q10 0 10 11M10 1q13 1 13 14" fill="none" stroke="#4868a8" stroke-width="2"/></svg></button>
            <button class="spaced" aria-label="浏览器"><svg viewBox="0 0 24 24"><path d="M4 1h12l5 5v17H4z" fill="#fff" stroke="#2e5aa8" stroke-width="1.4"/><path d="M16 1v5h5" fill="none" stroke="#2e5aa8"/><circle cx="12" cy="15" r="5" fill="#3c84c0"/><path d="M9 12l4 2-2 5-3-3zM14 12l2 4-2 1z" fill="#50b050"/></svg></button>
            <button class="spaced" aria-label="历史记录"><svg viewBox="0 0 24 24"><circle cx="12" cy="12" r="10" fill="#dceaf6" stroke="#666e7c" stroke-width="2"/><path d="M12 5v8h5" fill="none" stroke="#1c2850" stroke-width="2"/><path d="M12 3v1M12 20v1M3 12h1M20 12h1" stroke="#444"/></svg></button>
            <button class="cut" aria-label="角色"><svg viewBox="0 0 24 24"><path d="M2 7l5-4v14l-5 2zM8 4h15v12H8z" fill="#eef2f6" stroke="#5c6878"/><circle cx="12" cy="9" r="2" fill="#2c6cc0"/><path d="M9 15q3-5 6 0" fill="#48a048"/><path d="M17 8h4M17 11h4" stroke="#444"/></svg></button>
            <button class="mini" aria-label="滚动到顶部">▲</button>
            <button class="mini" aria-label="向上滚动">▲</button>
        </aside>

        <section class="navigator">
            <h2><svg viewBox="0 0 12 12"><path d="M1 11l2-4" stroke="#111"/><ellipse cx="6" cy="6" rx="4.5" ry="3.5" fill="#b8b878" stroke="#111" transform="rotate(-35 6 6)"/><ellipse cx="8" cy="4" rx="3" ry="2" fill="#fffce0" stroke="#111" transform="rotate(-35 8 4)"/></svg>操作导航器<span> - </span>程序顺序</h2>
            <div class="tree-box">
                <div class="tree-view">
                    <table>
                        <colgroup><col class="c-name"><col class="c-change"><col class="c-path"><col class="c-track"><col class="c-tool"><col class="c-geo"><col class="c-stock"><col></colgroup>
                        <thead>
                            <tr><th>名称</th><th>换刀</th><th>刀</th><th>刀轨</th><th>刀具</th><th>几何体</th><th>余量</th><th>底面</th></tr>
                        </thead>
                        <tbody>
                            <tr><td><div class="node root">NC_PROGRAM</div></td><td></td><td></td><td></td><td></td><td></td><td></td><td></td></tr>
                            <tr><td><div class="node cjk"><i class="ex plus"></i><svg class="fold"><use href="#folder"/></svg>未用项</div></td><td></td><td></td><td></td><td></td><td></td><td></td><td></td></tr>
                            <tr><td><div class="node cjk"><i class="ex"></i><svg class="st"><use href="#warn"/></svg><svg class="fold"><use href="#folder"/></svg>花瓶加工</div></td><td></td><td></td><td></td><td></td><td></td><td></td><td></td></tr>
                            <tr><td><div class="node"><i class="v"></i><i class="ex"></i><svg class="st"><use href="#warn"/></svg><svg class="fold"><use href="#folder"/></svg>01</div></td><td></td><td></td><td></td><td></td><td></td><td></td><td></td></tr>
                            <tr class="selected"><td><div class="node op"><i class="v"></i><i class="v"></i><i class="l"></i><svg class="st"><use href="#warn"/></svg><svg class="fold"><use href="#cavity"/></svg><b>CAVITY_MILL</b></div></td><td><svg class="bit"><use href="#tool"/></svg></td><td>0</td><td><svg class="st"><use href="#ok"/></svg></td><td>D12_SD6_R3</td><td>1</td><td>0.1000</td><td>0</td></tr>
                            <tr><td><div class="node"><i class="v"></i><i class="ex"></i><svg class="st"><use href="#warn"/></svg><svg class="fold"><use href="#folder"/></svg>02</div></td><td></td><td></td><td></td><td></td><td></td><td></td><td></td></tr>
                            <tr><td><div class="node op"><i class="v"></i><i class="v"></i><i class="t"></i><svg class="st"><use href="#warn"/></svg><svg class="fold"><use href="#mill"/></svg>MY-QG_COPY</div></td><td></td><td>0</td><td><svg class="st"><use href="#ok"/></svg></td><td>D12_SD6_R3</td><td>1</td><td>0.0000</td><td>0</td></tr>
                            <tr><td><div class="node op"><i class="v"></i><i class="v"></i><i class="l"></i><svg class="st"><use href="#warn"/></svg><svg class="fold"><use href="#mill"/></svg>MY-QG_COPY_COPY_1</div></td><td></td><td>0</td><td><svg class="st"><use href="#ok"/></svg></td><td>D12_SD6_R3</td><td>1</td><td>0.0000</td><td>0</td></tr>
                            <tr><td><div class="node"><i class="v"></i><i class="ex"></i><svg class="st"><use href="#warn"/></svg><svg class="fold"><use href="#folder"/></svg>03</div></td><td></td><td></td><td></td><td></td><td></td><td></td><td></td></tr>
                            <tr><td><div class="node op"><i class="v"></i><i class="v"></i><i class="t"></i><svg class="st"><use href="#warn"/></svg><svg class="fold"><use href="#mill"/></svg>MY-QG_COPY_COPY</div></td><td></td><td>0</td><td><svg class="st"><use href="#ok"/></svg></td><td>D12_SD6_R3</td><td>1</td><td>0.0000</td><td>0</td></tr>
                            <tr><td><div class="node op"><i class="v"></i><i class="v"></i><i class="l"></i><svg class="st"><use href="#warn"/></svg><svg class="fold"><use href="#mill"/></svg>MY-QG_COPY_COPY_COPY</div></td><td></td><td>0</td><td><svg class="st"><use href="#ok"/></svg></td><td>D12_SD6_R3</td><td>1</td><td>0.0000</td><td>0</td></tr>
                            <tr><td><div class="node"><i class="v"></i><i class="ex"></i><svg class="st"><use href="#warn"/></svg><svg class="fold"><use href="#folder"/></svg>04</div></td><td></td><td></td><td></td><td></td><td></td><td></td><td></td></tr>
                            <tr><td><div class="node op"><i class="v"></i><i class="v"></i><i class="l"></i><svg class="st"><use href="#warn"/></svg><svg class="fold"><use href="#mill"/></svg>MY-JPA_COPY</div></td><td><svg class="bit"><use href="#tool"/></svg></td><td>0</td><td><svg class="st"><use href="#ok"/></svg></td><td>D4R2</td><td>1</td><td>0.0000</td><td>0</td></tr>
                            <tr><td><div class="node"><i class="v"></i><i class="t"></i><svg class="st"><use href="#ok"/></svg><svg class="fold"><use href="#folder"/></svg>05</div></td><td></td><td></td><td></td><td></td><td></td><td></td><td></td></tr>
                            <tr><td><div class="node"><i class="v"></i><i class="t"></i><svg class="st"><use href="#warn"/></svg><svg class="fold"><use href="#folder"/></svg>06</div></td><td></td><td></td><td></td><td></td><td></td><td></td><td></td></tr>
                            <tr><td><div class="node"><i class="v"></i><i class="t"></i><svg class="st"><use href="#ok"/></svg><svg class="fold"><use href="#folder"/></svg>07</div></td><td></td><td></td><td></td><td></td><td></td><td></td><td></td></tr>
                            <tr><td><div class="node"><i class="v"></i><i class="t"></i><svg class="st"><use href="#ok"/></svg><svg class="fold"><use href="#folder"/></svg>08</div></td><td></td><td></td><td></td><td></td><td></td><td></td><td></td></tr>
                            <tr><td><div class="node"><i class="v"></i><i class="t"></i><svg class="st"><use href="#ok"/></svg><svg class="fold"><use href="#folder"/></svg>09</div></td><td></td><td></td><td></td><td></td><td></td><td></td><td></td></tr>
                            <tr><td><div class="node"><i class="v"></i><i class="l"></i><svg class="st"><use href="#ok"/></svg><svg class="fold"><use href="#folder"/></svg>010</div></td><td></td><td></td><td></td><td></td><td></td><td></td><td></td></tr>
                            <tr><td><div class="node cjk"><i class="ex"></i><svg class="st"><use href="#warn"/></svg><svg class="fold"><use href="#folder"/></svg>工件倒扣加工</div></td><td></td><td></td><td></td><td></td><td></td><td></td><td></td></tr>
                        </tbody>
                    </table>
                    <div class="vscroll"><i class="up"></i><span>≡</span><i class="down"></i></div>
                </div>
                <div class="hscroll"><i class="left"></i><span>III</span><i class="right"></i></div>
            </div>
            <div class="splitter"><span></span></div>
            <div class="dependency"><h3>相依性</h3><button aria-label="展开"><svg viewBox="0 0 12 12"><path d="M1 2l5 7 5-7" fill="none" stroke="#555" stroke-width="2.4"/></svg></button></div>
        </section>

        <section class="viewport">
            <svg viewBox="640 204 666 488" preserveAspectRatio="xMidYMin slice" role="img" aria-label="花瓶刀轨">
                <defs>
                    <linearGradient id="bodyFill"><stop offset="0" stop-color="#b4b000"/><stop offset=".35" stop-color="#9a9800"/><stop offset=".55" stop-color="#969400"/><stop offset=".8" stop-color="#b8b400"/><stop offset="1" stop-color="#e6e200"/></linearGradient>
                    <radialGradient id="bodyShade" cx=".5" cy="1" r=".62"><stop offset="0" stop-color="#444200" stop-opacity=".75"/><stop offset="1" stop-color="#444200" stop-opacity="0"/></radialGradient>
                    <linearGradient id="rimFill" x1="0" y1="0" x2="1" y2="1"><stop offset="0" stop-color="#fff91a"/><stop offset=".5" stop-color="#e6e000"/><stop offset="1" stop-color="#fffa00"/></linearGradient>
                    <linearGradient id="bowlFill"><stop offset="0" stop-color="#dcd600"/><stop offset=".4" stop-color="#6c6900"/><stop offset="1" stop-color="#aaa600"/></linearGradient>
                    <linearGradient id="neckFill"><stop offset="0" stop-color="#a8a400"/><stop offset=".5" stop-color="#525000"/><stop offset="1" stop-color="#b4b000"/></linearGradient>
                    <linearGradient id="shoulderFill" x1="0" y1="0" x2="0" y2="1"><stop offset="0" stop-color="#0ff"/><stop offset=".3" stop-color="#0ff"/><stop offset=".5" stop-color="#3cf8c0" stop-opacity=".8"/><stop offset="1" stop-color="#78f4a8" stop-opacity=".65"/></linearGradient>
                    <pattern id="hatch" width="3" height="3" patternUnits="userSpaceOnUse" patternTransform="rotate(20)"><path d="M0 0h3v3H0z" fill="#d9c4ff"/><path d="M0 1h3" stroke="#1a10d0" stroke-width="1.2"/></pattern>
                    <clipPath id="shoulderClip"><path d="M843 395C815 412 800 440 800 472c0 14 3 27 8 36 30 40 70 53 117 53s92-20 118-66c4-8 6-17 6-30 0-28-14-46-34-65z"/></clipPath>
                    <clipPath id="torusClip"><path d="M816 289h214v132l-14-10-25-20q-70 55-136 0l-24 20-15 0z"/></clipPath>
                </defs>
                <path d="M640 203h666v489H640z"/>
                <path d="M808 485C796 515 796 565 803 592c6 35 22 70 44 100h160c28-36 47-88 47-137 0-27-6-52-12-72L985 430H862z" fill="url(#bodyFill)"/>
                <path d="M808 485C796 515 796 565 803 592c6 35 22 70 44 100h160c28-36 47-88 47-137 0-27-6-52-12-72z" fill="url(#bodyShade)"/>

                <!-- Outer flange tool path -->
                <g clip-path="url(#torusClip)" fill="none" stroke="#0ff">
                    <ellipse cx="923" cy="372" rx="98" ry="76" stroke-width="18" stroke-opacity=".62"/>
                    <g id="torusRings"></g>
                </g>
                <path d="M1029 372q-1 22-10 38l-14-8-8-14 8-20z" fill="#0ff" opacity=".7"/>

                <!-- Neck and shoulder tool path -->
                <g clip-path="url(#shoulderClip)">
                    <path d="M800 440q14-16 36-20l22-10h132l22 10q26 8 40 30v120H800z" fill="url(#shoulderFill)"/>
                    <path d="M842 424l20-14h126l18 12q-26 34-84 35-54 0-80-33z" fill="#b8d878" opacity=".75"/>
                    <path d="M860 398h128q0 22 6 30-26 18-72 18-42 0-66-18 4-12 4-30z" fill="url(#neckFill)"/>
                    <path d="M836 440q30 38 88 38 50 0 78-30l22-4-18 22q-30 32-86 30-58-2-96-50z" fill="#0ff" opacity=".85"/>
                    <path d="M940 472q40-24 60-22-16 26-54 33z" fill="#b9d56a" opacity=".35"/>
                    <path d="M832 400l20-12 8 16-1 8-20 12-12 4zM1016 412l-22-22-4 14 2 8 18 14z"/>
                    <g id="shoulderRings" fill="none" stroke="#0ff"></g>
                    <path d="M848 471q70 62 146 10" fill="none" stroke="#085a58"/>
                </g>

                <!-- Rim and inner bowl -->
                <ellipse cx="923" cy="363" rx="74" ry="55" fill="url(#bowlFill)"/>
                <ellipse cx="923" cy="363" rx="70" ry="51" fill="none" stroke="#333100"/>
                <path d="M872 366q4 20 20 26 4 6 4 19 29 12 57 0 0-13 5-20 15-7 15-25-10-40-50-40-42 0-51 40z" fill="#3c9070" opacity=".4"/>
                <path d="M890 392q34 8 58-8 17-10 21-30l3 10q0 18-14 28-5 8-5 19-29 10-57 0 0-12-6-19z" fill="#0ff"/>
                <g id="bowlRings" fill="none" stroke="#4ccaa8" stroke-opacity=".8"></g>
                <path d="M883 377l3-10 10-6 8 1 10 16-7 10-20-2z" fill="#f4b03c"/>
                <path d="M900 361l8 1 18 22-8 2z" fill="#1515d0"/>
                <path d="M892 389l16-8 14 1 1 16q-20-1-31-9z" fill="#ffd0d8"/>
                <ellipse cx="923" cy="363" rx="74" ry="55" fill="none" stroke="url(#rimFill)" stroke-width="8"/>
                <path d="M846 375q15 44 77 47 62-3 76-45" fill="none" stroke="#5c5a00"/>

                <!-- Side tool path -->
                <path d="M812 398q14-10 24 0l6 12-6 20-12 8z" fill="#fff" opacity=".6"/>
                <path d="M805 410l10-14 16 4-2 16-8 14 14 24-4 12 4 14-23 55-20-19 15-30 4-30z" fill="url(#hatch)"/>
                <path d="M805 412l12 18 8 10 2 14 6 26-14-18-9-18-4-14z" fill="#1010e0"/>
                <path d="M842 408q-3 10-9 14-6 12-1 16 8 4 5 16-6 8 0 15 7 8 3 16l-20 38q-4 8-12 12l6-10 17-38q5-12-2-20-7-8-1-18 0-8-7-14-3-12 6-20z" fill="#ffb833" stroke="#ffb833" stroke-width="2"/>
                <path d="M793 513l13 2 4 20z" fill="#1414d4"/>
                <g fill="none" stroke="#f6e6c8"><path d="M812 402q10-14 26-6t4 24M816 404q9-10 20-2t0 18M820 406q8-8 14 0t-2 14"/></g>

                <!-- Bounding guides and axes -->
                <path d="M788 270L894 222" stroke="#f02020" stroke-width="1.5" stroke-dasharray="9 8"/>
                <path d="M789 270l3 245M833 280l1 120M893 222l2 140M924 236l1 136" stroke="#1818e8" stroke-width="1.5" stroke-dasharray="9 8"/>
                <path d="M922 360L871 296" stroke="#3c9440" stroke-width="2"/>
                <path d="M872 298l11 6-6 6z" fill="#45a048"/>
                <circle cx="906" cy="341" r="4" fill="#e02020"/>
                <path d="M924 360l88-40" stroke="#e04050" stroke-width="2"/>
                <path d="M1010 320l-18 5 4 7zM961 342l-18 5 4 7z" fill="#e84850"/>
                <path d="M922 292v68" stroke="#1430a8" stroke-width="2"/>
                <path d="M922 291l-4 16q4 3 8 0zM922 325l-4 16q4 3 8 0z" fill="#1440c8"/>
                <path d="M919 339h6v6h-6z" fill="#a01838"/>
                <g class="axis">
                    <text x="871" y="292" fill="#38a044">YM</text><text x="925" y="290" fill="#3058f0">ZM</text><text x="995" y="315" fill="#e83040">YM</text>
                    <text x="897" y="322" fill="#a8783c">YC</text><text x="926" y="322" fill="#6468b0">ZC</text><text x="954" y="335" fill="#d86030">XC</text>
                </g>

                <!-- View triad -->
                <path d="M676 653l14-7 12 8v12l-13 7-13-7z" fill="#b8b8b8"/><path d="M676 653l13 7 13-6M689 660v13" stroke="#eee" fill="none"/>
                <path d="M686 677l-14-17" stroke="#38a038" stroke-width="2"/><path d="M686 677l25-11" stroke="#d83030" stroke-width="2"/><path d="M686 677v-18" stroke="#1838c0" stroke-width="2"/>
                <path d="M670 657l7 4-4 3z" fill="#38a038"/><path d="M712 665l-8 1 3 4z" fill="#d83030"/><path d="M686 657l-3 7h6z" fill="#1838c0"/>
                <circle cx="686" cy="678" r="4" fill="#ddd"/>
                <g class="axis small"><text x="664" y="659" fill="#38a044">Y</text><text x="683" y="657" fill="#3058f0">Z</text><text x="712" y="668" fill="#e83040">X</text></g>

                <!-- Watermark -->
                <g class="mark">
                    <path d="M1059 597l36 20v42l-36 20-35-20v-42z" fill="#0a6ea4" opacity=".78"/>
                    <path d="M1059 597l18 10q4 10 2 19l-20-12-18 6-17-3z" fill="#aab8c0" opacity=".55"/>
                    <path d="M1024 617q20-8 35-3l-18 11v24q-8 0-17 10z" fill="#b8e0c8" opacity=".5"/>
                    <path d="M1059 615l20 11v23l-20 11-20-11v-23z" fill="#000"/>
                    <path d="M1059 619l16 9-16 9-16-9z" fill="#467888"/><path d="M1043 629l15 9v17l-15-8z" fill="#2c6486"/><path d="M1060 638l15-9v18l-15 8z" fill="#045480"/>
                    <path d="M1071 604q10 12 7 22M1094 628q-4 16-34 26M1088 663q-30 8-49-16M1024 624q18-10 35-6" stroke="#001018" fill="none"/>
                    <text x="1102" y="645" class="mark-3d">3D</text><text x="1166" y="643" class="mark-cn">世界网</text>
                    <text x="1104" y="666" class="mark-url">WWW.3DSJW.COM</text>
                </g>
            </svg>
        </section>
    </main>

    <script src="script.js"></script>
</body>
</html>
```
FILE: styles.css
```css
* {
    margin: 0;
    padding: 0;
    box-sizing: border-box;
}

body {
    height: 100vh;
    display: flex;
    flex-direction: column;
    overflow: hidden;
    background-color: #dcdcdc;
    color: #000;
    font-family: "Liberation Sans", "Noto Sans CJK SC", sans-serif;
    font-size: 12px;
}

.defs {
    display: none;
}

button {
    border: none;
    background: none;
    font: inherit;
    color: inherit;
}

/* Title bar */
.titlebar {
    position: relative;
    flex: 0 0 21px;
    display: flex;
    align-items: center;
    background: linear-gradient(#909394 0, #565859 7px, #1c1c1d 7px, #1a1a1b 20px, #000 20px);
    color: #e8e8e8;
}

.app-logo {
    width: 18px;
    height: 18px;
    margin-left: 2px;
}

.titlebar h1 {
    flex: 1;
    margin-left: 4px;
    font-family: "Noto Sans", "Noto Sans CJK SC", sans-serif;
    font-size: 13px;
    font-weight: normal;
    line-height: 20px;
}

.top-mark {
    position: absolute;
    left: 71%;
    top: 0;
    width: 72px;
    height: 3px;
    background: linear-gradient(90deg, #9c3a1c 0 18px, #56682c 22px 54px, #48c83c 60px);
}

.brand {
    font-family: "DejaVu Sans", sans-serif;
    font-size: 12px;
    font-weight: bold;
    color: #fff;
    margin-right: 27px;
}

.win-btn {
    width: 4px;
    height: 18px;
    background-color: #4a4a4a;
    border-left: 1px solid #aaa;
    border-radius: 4px 0 0 4px;
}

/* Menu bar */
.menubar {
    flex: 0 0 24px;
    display: flex;
    align-items: center;
    padding: 2px 0 0 4px;
    background: linear-gradient(#e9e9e9, #e0e0e0);
    border-bottom: 1px solid #bcbcbc;
}

.menubar .grip {
    height: 16px;
    margin-right: 2px;
}

.menubar a {
    margin-right: 13px;
    color: #000;
    text-decoration: none;
    white-space: pre;
    line-height: 20px;
}

.menubar a span {
    font-family: "DejaVu Sans Mono", monospace;
    font-size: 10px;
}

.menu-icon {
    width: 18px;
    height: 18px;
    margin-right: 3px;
}

/* Toolbars */
.toolbar {
    flex: 0 0 34px;
    display: flex;
    background: linear-gradient(#e0e0e0, #d6d6d6);
    border-top: 1px solid #f4f4f4;
    border-bottom: 1px solid #b8b8b8;
    overflow: hidden;
}

.toolbar.dark {
    background: linear-gradient(#d8d8d8, #c9c9c9);
    border-bottom-color: #9a9a9a;
}

.group {
    flex: none;
    display: flex;
    align-items: center;
    padding: 0 4px;
    border-right: 1px solid #bbb;
}

.group.first {
    padding-left: 7px;
}

.group.rest {
    flex: 1;
    border-right: none;
    border-left: 1px solid #f0f0f0;
}

.group.gap {
    width: 288px;
}

.grip {
    width: 3px;
    height: 24px;
    margin-right: 4px;
    background: repeating-linear-gradient(#999 0 2px, #f4f4f4 2px 4px);
}

.toolbar button {
    flex: none;
    width: 24px;
    height: 24px;
    margin-right: 7px;
    white-space: nowrap;
}

.toolbar button svg {
    display: block;
    flex: none;
    width: 24px;
    height: 24px;
}

.toolbar button.wide {
    width: auto;
    display: flex;
    align-items: center;
}

.toolbar button.start {
    gap: 3px;
    margin-right: 9px;
}

.toolbar button.finder {
    gap: 4px;
}

.sep {
    flex: none;
    width: 2px;
    height: 30px;
    margin-left: -2px;
    margin-right: 5px;
    background: linear-gradient(90deg, #b0b0b0 50%, #fafafa 50%);
}

.caret {
    flex: none;
    width: 6px;
    height: 3px;
    background-color: #000;
    clip-path: polygon(0 0, 100% 0, 50% 100%);
}

.caret.low {
    align-self: flex-end;
    margin-right: 2px;
    margin-bottom: 6px;
}

.toolbar .blue {
    border-radius: 6px;
    background: linear-gradient(#4aa4dc, #1d80c8 30%, #1d80c8);
}

.toolbar .navy {
    background: linear-gradient(#1c4474, #0a6080);
}

.toolbar .tri {
    border-radius: 6px;
    background: linear-gradient(#2f92d8 0 8px, #24962c 8px 16px, #f07a20 16px);
}

.toolbar .cancel {
    background-color: #fff;
    color: #d81818;
    font-family: "Noto Sans CJK SC", sans-serif;
    font-weight: bold;
}

.w {
    fill: none;
    stroke: #fff;
    stroke-width: 2;
}

.thin {
    stroke-width: 1;
}

.w text {
    stroke: none;
    fill: #fff;
    font-weight: bold;
}

.tiny {
    font-size: 7px;
}

.w .name {
    font-size: 7px;
    fill: #f4f060;
}

/* Selection bar */
.select-bar {
    align-items: center;
    padding-left: 5px;
    background: linear-gradient(#cfcfcf, #dedede);
}

.select-bar .caret {
    margin-right: 7px;
}

.combo {
    display: flex;
    height: 17px;
    margin-right: 8px;
    border: 1px solid #667;
    border-radius: 2px;
    background-color: #fff;
}

.combo.filter {
    width: 110px;
}

.combo.scope {
    width: 116px;
}

.combo select {
    flex: 1;
    width: 0;
    border: none;
    appearance: none;
    background: none;
    font: inherit;
    line-height: 15px;
    color: #000;
}

.combo span {
    width: 16px;
    background: linear-gradient(#b4d4f4, #6aa4e4);
}

.combo span::before {
    content: "";
    display: block;
    width: 12px;
    height: 7px;
    margin: 4px 2px;
    background-color: #111;
    clip-path: polygon(0 0, 100% 0, 50% 100%);
}

.toolbar .boxed {
    margin-right: 3px;
    border: 1px solid #d04050;
}

.select-bar .boxed svg {
    width: 22px;
    height: 22px;
}

.cue-line {
    flex: 0 0 23px;
    display: flex;
    background: linear-gradient(#e2e2e2, #d8d8d8);
    border-bottom: 1px solid #777;
}

.cue-line span {
    flex: 643 0 0;
    border-right: 2px groove #ddd;
}

.cue-line span:last-child {
    flex: 17 0 0;
    border: none;
}

/* Work area */
main {
    flex: 1;
    min-height: 0;
    display: flex;
}

.resource-bar {
    flex: 0 0 33px;
    display: flex;
    flex-direction: column;
    align-items: flex-end;
    padding-top: 16px;
    background: linear-gradient(90deg, #b8b8b8, #a2a2a2);
    border-right: 1px solid #777;
    overflow: hidden;
}

.resource-bar button {
    flex: none;
    width: 26px;
    height: 40px;
    margin-bottom: 2px;
    background: linear-gradient(90deg, #dcdcdc, #c0c0c0);
    border: 1px solid #666;
    border-right: none;
    border-radius: 4px 0 0 4px;
}

.resource-bar svg {
    width: 24px;
    height: 24px;
    display: block;
}

.resource-bar .active {
    width: 28px;
    height: 44px;
    margin-top: -1px;
    margin-bottom: 1px;
    background: #ebebeb;
}

.resource-bar .spaced {
    margin: 12px 0 2px;
}

.resource-bar .cut {
    height: 19px;
    overflow: hidden;
    margin-bottom: 4px;
    border-bottom: none;
}

.resource-bar .mini {
    width: 16px;
    height: 15px;
    margin: 0 7px 1px 0;
    border: 1px solid #999;
    border-radius: 0;
    background: #dedede;
    color: #999;
    font-size: 8px;
    line-height: 12px;
}

.navigator {
    flex: 0 0 607px;
    min-width: 0;
    display: flex;
    flex-direction: column;
    padding: 0 9px;
    background-color: #ebebeb;
    border-right: 2px solid #888;
}

.navigator h2 {
    flex: 0 0 34px;
    display: flex;
    align-items: center;
    padding: 4px 6px 0;
    font-family: "Noto Sans CJK SC", sans-serif;
    font-size: 13px;
    font-weight: bold;
    white-space: pre;
}

.navigator h2 span {
    font-family: "DejaVu Sans Mono", monospace;
    font-size: 12px;
}

.navigator h2 svg {
    width: 11px;
    height: 11px;
    margin-right: 12px;
}

.tree-box {
    flex: 1;
    min-height: 0;
    display: flex;
    flex-direction: column;
    border: 1px solid #555;
    background-color: #ececec;
}

.tree-view {
    flex: 1;
    min-height: 0;
    display: grid;
    grid-template-rows: minmax(0, 1fr);
    overflow: hidden;
}

table {
    grid-area: 1 / 1;
    align-self: start;
    width: 100%;
    table-layout: fixed;
    border-collapse: separate;
    border-spacing: 0;
}

.c-name { width: 241px; }
.c-change { width: 47px; }
.c-path { width: 17px; }
.c-track { width: 37px; }
.c-tool { width: 113px; }
.c-geo { width: 51px; }
.c-stock { width: 55px; }

th {
    height: 17px;
    padding-left: 6px;
    overflow: hidden;
    white-space: nowrap;
    text-align: left;
    font-weight: normal;
    line-height: 16px;
    background: linear-gradient(#fafafa, #d2d2d2);
    border-right: 1px solid #aaa;
    border-bottom: 1px solid #777;
}

th:last-child {
    padding-left: 5px;
    border-right: none;
}

td {
    height: 20px;
    padding-left: 4px;
    overflow: hidden;
    white-space: nowrap;
    font-family: "DejaVu Sans Mono", monospace;
    font-size: 10px;
    line-height: 19px;
    color: #075050;
    background-color: #fff;
    border-right: 1px solid #dedede;
    border-bottom: 1px solid #e2e2e2;
}

td:first-child {
    padding: 0;
    border-right: 1px solid #000;
}

tr:nth-child(even) td {
    background-color: #f6f6f6;
}

td svg {
    display: block;
}

.node {
    display: flex;
    align-items: center;
    height: 19px;
    color: #222;
}

.node.root {
    padding-left: 4px;
}

.node.op {
    color: #075050;
}

.node.cjk {
    font-family: "Noto Sans CJK SC", sans-serif;
    font-size: 12px;
}

/* Tree guide lines, 19px for each level */
.node i {
    flex: none;
    width: 19px;
    height: 20px;
    background-repeat: no-repeat;
    --dots-v: repeating-linear-gradient(#999 0 1px, transparent 1px 2px);
    --dots-h: repeating-linear-gradient(90deg, #999 0 1px, transparent 1px 2px);
}

.node .v {
    background-image: var(--dots-v);
    background-size: 1px 20px;
    background-position: 9px 0;
}

.node .t {
    background-image: var(--dots-v), var(--dots-h);
    background-size: 1px 20px, 9px 1px;
    background-position: 9px 0, 9px 10px;
}

.node .l {
    background-image: var(--dots-v), var(--dots-h);
    background-size: 1px 10px, 9px 1px;
    background-position: 9px 0, 9px 10px;
}

.node .ex {
    display: flex;
    align-items: center;
    justify-content: center;
    background-image: var(--dots-h);
    background-size: 5px 1px;
    background-position: 14px 10px;
}

.node .ex::before {
    content: "";
    width: 9px;
    height: 9px;
    border: 1px solid #888;
    border-radius: 2px;
    background: linear-gradient(#222, #222) center / 5px 1px no-repeat, #fff;
}

.node .plus {
    margin-right: 1px;
}

.node .plus::before {
    background: linear-gradient(#222, #222) center / 5px 1px no-repeat, linear-gradient(#222, #222) center / 1px 5px no-repeat, #fff;
}

.st {
    flex: none;
    width: 18px;
    height: 18px;
}

.fold {
    flex: none;
    width: 16px;
    height: 16px;
    margin-right: 2px;
}

.op .fold {
    margin-right: 1px;
}

.bit {
    width: 10px;
    height: 14px;
    margin-left: 4px;
}

tr.selected td:not(:first-child),
.selected b {
    background-color: #3399ff;
    color: #fff;
    font-weight: normal;
}

.selected b {
    flex: 1;
    height: 19px;
    border: 1px dotted #c87030;
    line-height: 17px;
}

.selected .fold {
    margin-right: 0;
}

/* Scrollbars */
.vscroll {
    grid-area: 1 / 1;
    justify-self: end;
    width: 17px;
    margin-top: 17px;
    display: flex;
    flex-direction: column;
    align-items: center;
    padding: 8px 0 6px;
    background-color: #f0f0f0;
}

.vscroll span {
    width: 14px;
    height: 154px;
    margin: 7px 0 auto;
    border: 1px solid #888;
    border-radius: 2px;
    background: linear-gradient(90deg, #f8f8f8, #c4c4c4);
    text-align: center;
    line-height: 152px;
}

.hscroll {
    flex: 0 0 17px;
    display: flex;
    align-items: center;
    padding: 0 24px 0 7px;
    background-color: #ebebeb;
}

.hscroll span {
    flex: 0 0 326px;
    height: 15px;
    margin: 0 auto 0 8px;
    border: 1px solid #888;
    border-radius: 2px;
    background: linear-gradient(#f4f4f4, #bcbcbc);
    color: #444;
    text-align: center;
    font-size: 8px;
    line-height: 13px;
}

.up, .down {
    width: 7px;
    height: 4px;
    background-color: #333;
    clip-path: polygon(50% 0, 100% 100%, 0 100%);
}

.down {
    clip-path: polygon(0 0, 100% 0, 50% 100%);
}

.left, .right {
    width: 4px;
    height: 7px;
    background-color: #222;
    clip-path: polygon(0 50%, 100% 0, 100% 100%);
}

.right {
    clip-path: polygon(0 0, 100% 50%, 0 100%);
}

.splitter {
    flex: 0 0 12px;
    display: flex;
    justify-content: center;
    align-items: center;
    background: linear-gradient(#bbb, #bbb) center / 100% 1px no-repeat;
}

.splitter span {
    width: 112px;
    height: 5px;
    background-color: #ddd;
    border: 1px solid #aaa;
}

.dependency {
    flex: 0 0 17px;
    display: flex;
    overflow: hidden;
    background: linear-gradient(#fbfbfb, #dcdcdc);
    border: 1px solid #aaa;
    border-bottom: none;
}

.dependency h3 {
    flex: 1;
    padding-left: 6px;
    font-family: "Noto Sans CJK SC", sans-serif;
    font-size: 12px;
    line-height: 20px;
}

.dependency button {
    width: 23px;
    border-left: 1px solid #999;
}

.dependency svg {
    width: 12px;
    height: 12px;
}

.viewport {
    flex: 1;
    min-width: 0;
    background-color: #000;
}

.viewport svg {
    display: block;
    width: 100%;
    height: 100%;
}

.axis {
    font-family: "Liberation Sans", sans-serif;
    font-size: 11px;
}

.axis.small {
    font-size: 10px;
}

.mark text {
    fill: #828282;
}

.mark-3d {
    font-size: 46px;
    font-weight: bold;
}

.mark-cn {
    font-family: "Noto Sans CJK SC", sans-serif;
    font-size: 38px;
    font-weight: bold;
}

.mark-url {
    font-family: "DejaVu Sans", sans-serif;
    font-size: 17px;
    font-weight: bold;
}
```
FILE: script.js
```js
const SVG_NS = 'http://www.w3.org/2000/svg';

function addRing(group, cx, cy, rx, ry, stroke) {
    const ring = document.createElementNS(SVG_NS, 'ellipse');
    ring.setAttribute('cx', cx);
    ring.setAttribute('cy', cy);
    ring.setAttribute('rx', rx);
    ring.setAttribute('ry', ry);
    if (stroke) ring.setAttribute('stroke', stroke);
    group.appendChild(ring);
}

const torus = document.getElementById('torusRings');
for (let i = 0; i < 13; i++) {
    addRing(torus, 923, 372 - i / 3, 107 - i * 2.5, 83 - i * 2);
}

const shoulder = document.getElementById('shoulderRings');
// wide passes under the rim
for (let i = 0; i < 7; i++) {
    addRing(shoulder, 924, 375 + i * 4, 74 + i * 4, 54 + i);
}
// dense passes down the shoulder
for (let i = 0; i < 30; i++) {
    addRing(shoulder, 924, 430 + i, 96 + i, 38 + i * 2.2, '#4cf4d8');
}

const bowl = document.getElementById('bowlRings');
for (let i = 0; i < 15; i++) {
    addRing(bowl, 922, 365 + i * 0.8, 50 - i * 3, 40 - i * 2.4);
}
```
